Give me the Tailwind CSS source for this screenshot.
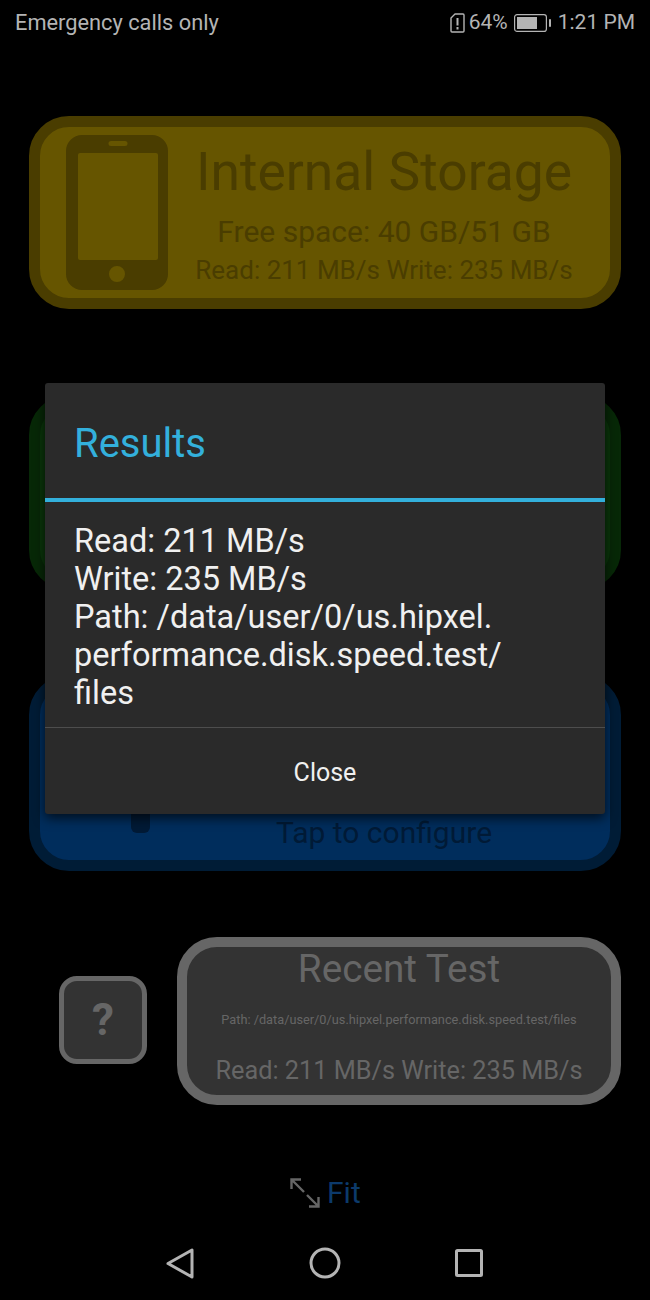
<!DOCTYPE html>
<html lang="en">
<head>
  <meta charset="UTF-8" />
  <meta name="viewport" content="width=device-width, initial-scale=1" />
  <title>Results</title>
  <script src="https://cdn.jsdelivr.net/npm/@tailwindcss/browser@4"></script>
</head>
<body class="bg-black font-['Roboto',sans-serif]">
  <div class="relative w-[650px] h-[1300px] overflow-hidden bg-black">

    <!-- status bar -->
    <div class="flex items-center justify-between h-[46px] pl-[15px] pr-[15px] text-[21px] text-[#b4b4b4]">
      <span class="text-[21.8px]">Emergency calls only</span>
      <div class="flex items-center">
        <svg class="w-[15px] h-[20px] mr-[4px]" viewBox="0 0 15 20" fill="none">
          <path d="M5 1h8a1 1 0 0 1 1 1v16a1 1 0 0 1-1 1H2a1 1 0 0 1-1-1V5z" stroke="#b4b4b4" stroke-width="1.4" stroke-linejoin="round"/>
          <path d="M7.500 5v7.500M7.500 14v2.500" stroke="#b4b4b4" stroke-width="2"/>
        </svg>
        <span>64%</span>
        <svg class="w-[38px] h-[18px] ml-[6px] mr-[6px]" viewBox="0 0 38 18" fill="none">
          <rect x="0.6" y="0.6" width="31.8" height="16.8" rx="2.5" stroke="#b4b4b4" stroke-width="1.2"/>
          <rect x="3" y="3" width="20" height="12" fill="#b4b4b4"/>
          <rect x="35" y="5" width="2" height="8" rx="1" fill="#b4b4b4"/>
        </svg>
        <span>1:21 PM</span>
      </div>
    </div>

    <!-- internal storage -->
    <div class="mt-[70px] mx-[29px] h-[193px] rounded-[40px] border-[11px] border-[#4a3d00] bg-[#665500] flex text-[#4a3d00]">
      <svg class="w-[102px] h-[155px] ml-[26px] mt-[8px] shrink-0" viewBox="0 0 102 155">
        <path fill-rule="evenodd" fill="#4a3d00" d="M16 0h70a16 16 0 0 1 16 16v123a16 16 0 0 1-16 16H16a16 16 0 0 1-16-16V16A16 16 0 0 1 16 0zM12 20v103a2 2 0 0 0 2 2h76a2 2 0 0 0 2-2V20a2 2 0 0 0-2-2H14a2 2 0 0 0-2 2zM51 131a8 8 0 1 0 0 16 8 8 0 0 0 0-16zM45 6a2.500 2.500 0 0 0 0 5h14a2.500 2.500 0 0 0 0-5z"/>
      </svg>
      <div class="flex-1 flex flex-col items-center pr-[36px] pl-[26px]">
        <div class="text-[53.400px] leading-[58px] mt-[16px] whitespace-nowrap">Internal Storage</div>
        <div class="text-[30px] leading-[34px] mt-[14px] whitespace-nowrap">Free space: 40 GB/51 GB</div>
        <div class="text-[26px] leading-[30px] mt-[6px] whitespace-nowrap">Read: 211 MB/s Write: 235 MB/s</div>
      </div>
    </div>

    <!-- sd card, mostly behind the dialog -->
    <div class="mt-[86px] mx-[29px] h-[195px] rounded-[40px] border-[11px] border-[#072807] bg-[#0a360a]"></div>

    <!-- configure -->
    <div class="mt-[85px] mx-[29px] h-[196px] rounded-[40px] border-[11px] border-[#001c36] bg-[#002d5c] flex justify-center text-[#001a36]">
      <div class="flex flex-col justify-end w-full relative pb-[9px] items-center">
        <div class="text-[30px] leading-[36px] ml-[118px] whitespace-nowrap">Tap to configure</div>
        <div class="absolute left-[91px] bottom-[27px] w-[19px] h-[30px] rounded-[6px] bg-[#001a36]"></div>
      </div>
    </div>

    <!-- recent test row -->
    <div class="mt-[66px] mx-[29px] flex items-center">
      <div class="ml-[30px] mb-[2px] w-[88px] h-[88px] rounded-[18px] border-[5px] border-[#666666] bg-[#333333] flex items-center justify-center text-[44px] font-bold text-[#666666] shrink-0">?</div>
      <div class="ml-[30px] w-[444px] h-[168px] rounded-[40px] border-[10px] border-[#666666] bg-[#333333] flex flex-col items-center text-[#666666]">
        <div class="text-[38.700px] leading-[44px] whitespace-nowrap">Recent Test</div>
        <div class="text-[12.750px] leading-[14px] mt-[22px] whitespace-nowrap">Path: /data/user/0/us.hipxel.performance.disk.speed.test/files</div>
        <div class="text-[25.300px] leading-[30px] mt-[29px] whitespace-nowrap">Read: 211 MB/s Write: 235 MB/s</div>
      </div>
    </div>

    <!-- fit -->
    <div class="mt-[70px] ml-[290px] flex items-center h-[36px]">
      <svg class="w-[30px] h-[30px] -mt-[1px]" viewBox="0 0 30 30" fill="none" stroke="#666666" stroke-width="2.4">
        <path d="M2 2l12 12M1.500 11V1.500H11M17 17l11 11M19 28.500h9.500V19"/>
      </svg>
      <span class="ml-[7px] text-[30px] leading-[36px] text-[#0c3a6b]">Fit</span>
    </div>

    <!-- nav bar -->
    <div class="mt-[36px] flex items-center h-[32px] relative">
      <svg class="ml-[166px] w-[28px] h-[31px]" viewBox="0 0 28 31" fill="none" stroke="#b4b4b4" stroke-width="3" stroke-linejoin="round">
        <path d="M2 15.500 26 2v27z"/>
      </svg>
      <svg class="ml-[115px] w-[32px] h-[32px]" viewBox="0 0 32 32" fill="none" stroke="#b4b4b4" stroke-width="3">
        <circle cx="16" cy="16" r="14"/>
      </svg>
      <svg class="ml-[114px] w-[28px] h-[28px]" viewBox="0 0 28 28" fill="none" stroke="#b4b4b4" stroke-width="3" stroke-linejoin="round">
        <rect x="1.500" y="1.500" width="25" height="25" rx="1"/>
      </svg>
    </div>

    <!-- results dialog -->
    <div class="absolute left-[45px] top-[383px] w-[560px] h-[431px] rounded-[3px] bg-[#2a2a2a] shadow-[0_4px_12px_rgba(0,0,0,0.7)] flex flex-col">
      <div class="h-[109px] flex items-center pl-[29px] pt-[6px] text-[40px] text-[#33b0dc] border-b-[4px] border-[#33b0dc] box-content">Results</div>
      <div class="h-[226px] pl-[29px] pr-[30px] pt-[20px] text-[32.500px] leading-[38px] text-[#f0f0f0] border-b border-[#4d4d4d]">
        <div>Read: 211 MB/s</div>
        <div>Write: 235 MB/s</div>
        <div>Path: /data/user/0/us.hipxel.</div>
        <div>performance.disk.speed.test/</div>
        <div>files</div>
      </div>
      <div class="flex-1 flex items-center justify-center pt-[3px] text-[25px] text-[#f0f0f0]">Close</div>
    </div>
  </div>
</body>
</html>
